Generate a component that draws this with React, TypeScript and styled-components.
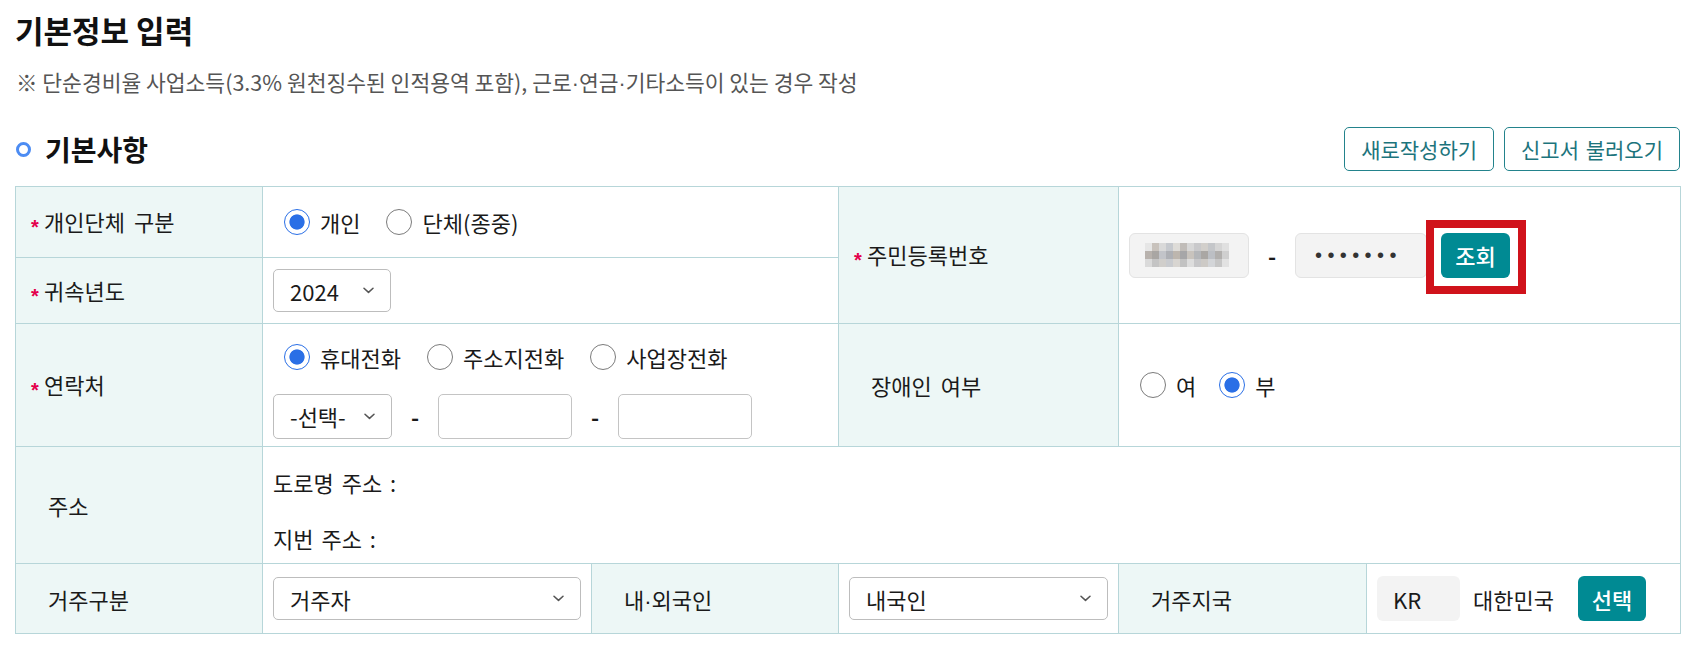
import React from 'react';
import styled, { createGlobalStyle } from 'styled-components';

const GlobalStyle = createGlobalStyle`
  * {
    box-sizing: border-box;
  }
  body {
    margin: 0;
    background: #fff;
    color: #111;
    font-family: 'Noto Sans CJK KR', 'Noto Sans', sans-serif;
  }
`;

const MOSAIC = [
  ['#e6e6e6', '#c8c2bc', '#d9d9d9', '#c6c9ce', '#dedcd8', '#c0bcb8', '#d7d7d7', '#c9c9cb', '#d2cfcb', '#c4c6c9', '#d5d5d5', '#e0e0e0'],
  ['#b8b2ad', '#a9a6a3', '#c2c4c9', '#aeb0b5', '#bdb6ae', '#a6a6a8', '#c8c3bd', '#b4b6b9', '#aaa7a4', '#bcbfc4', '#b1afad', '#cfcfcf'],
  ['#dadada', '#c4c4c4', '#d0cecb', '#c9cbcf', '#d8d5d1', '#c2c2c2', '#dddddd', '#c7c7c9', '#cdcac6', '#d3d5d8', '#c6c6c6', '#e2e2e2'],
];

const Chevron = () => (
  <svg width="11" height="7" viewBox="0 0 11 7" fill="none">
    <path d="M1 1.2 L5.5 5.4 L10 1.2" stroke="#555" strokeWidth="1.5" strokeLinecap="round" strokeLinejoin="round" />
  </svg>
);

const Mosaic = () => (
  <svg width="84" height="24" viewBox="0 0 84 24">
    {MOSAIC.map((row, r) =>
      row.map((c, i) => <rect key={`${r}-${i}`} x={i * 7} y={r * 8} width="7" height="8" fill={c} />)
    )}
  </svg>
);

interface RadioProps {
  label: string;
  checked?: boolean;
}

const Radio: React.FC<RadioProps> = ({ label, checked }) => (
  <RadioLabel>
    <RadioMark $checked={checked} />
    {label}
  </RadioLabel>
);

const Select: React.FC<{ value: string; width?: number; height?: number }> = ({ value, width, height }) => (
  <SelectBox $width={width} $height={height}>
    <span>{value}</span>
    <Chevron />
  </SelectBox>
);

const Required = () => <Star>*</Star>;

const App: React.FC = () => {
  return (
    <Page>
      <GlobalStyle />
      <Title>기본정보 입력</Title>
      <Notice>
        ※ 단순경비율 사업소득(3.3% 원천징수된 인적용역 포함), 근로<Mid>·</Mid>연금<Mid>·</Mid>기타소득이 있는 경우 작성
      </Notice>

      <SectionHead>
        <SectionTitle>
          <Dot />
          기본사항
        </SectionTitle>
        <Actions>
          <OutlineButton>새로작성하기</OutlineButton>
          <OutlineButton>신고서 불러오기</OutlineButton>
        </Actions>
      </SectionHead>

      <Table>
        <colgroup>
          <col style={{ width: 247 }} />
          <col style={{ width: 329 }} />
          <col style={{ width: 247 }} />
          <col style={{ width: 280 }} />
          <col style={{ width: 248 }} />
          <col style={{ width: 314 }} />
        </colgroup>
        <tbody>
          <Row $h={71}>
            <Label>
              <Required />
              개인단체 구분
            </Label>
            <Cell colSpan={2}>
              <RadioGroup>
                <Radio label="개인" checked />
                <Radio label="단체(종중)" />
              </RadioGroup>
            </Cell>
            <Label rowSpan={2}>
              <Required />
              주민등록번호
            </Label>
            <Cell rowSpan={2} colSpan={2}>
              <Inline>
                <GrayInput $width={120}>
                  <Mosaic />
                </GrayInput>
                <Dash>-</Dash>
                <GrayInput $width={132}>
                  <Dots>•••••••</Dots>
                </GrayInput>
                <Highlight>
                  <FillButton>조회</FillButton>
                </Highlight>
              </Inline>
            </Cell>
          </Row>
          <Row $h={66}>
            <Label>
              <Required />
              귀속년도
            </Label>
            <Cell colSpan={2}>
              <Select value="2024" width={118} />
            </Cell>
          </Row>
          <Row $h={123}>
            <Label>
              <Required />
              연락처
            </Label>
            <Cell colSpan={2}>
              <Stack>
                <RadioGroup>
                  <Radio label="휴대전화" checked />
                  <Radio label="주소지전화" />
                  <Radio label="사업장전화" />
                </RadioGroup>
                <Inline>
                  <Select value="-선택-" width={119} height={45} />
                  <Dash>-</Dash>
                  <TextInput />
                  <Dash>-</Dash>
                  <TextInput />
                </Inline>
              </Stack>
            </Cell>
            <Label $plain>장애인 여부</Label>
            <Cell colSpan={2}>
              <RadioGroup $gap={23}>
                <Radio label="여" />
                <Radio label="부" checked />
              </RadioGroup>
            </Cell>
          </Row>
          <Row $h={117}>
            <Label $plain>주소</Label>
            <Cell colSpan={5}>
              <AddressLines>
                <span>도로명 주소 :</span>
                <span>지번 주소 :</span>
              </AddressLines>
            </Cell>
          </Row>
          <Row $h={70}>
            <Label $plain>거주구분</Label>
            <Cell>
              <Select value="거주자" />
            </Cell>
            <Label $plain>
              내<Mid>·</Mid>외국인
            </Label>
            <Cell>
              <Select value="내국인" />
            </Cell>
            <Label $plain>거주지국</Label>
            <Cell>
              <Inline>
                <CodeBox>KR</CodeBox>
                <CountryName>대한민국</CountryName>
                <FillButton $small>선택</FillButton>
              </Inline>
            </Cell>
          </Row>
        </tbody>
      </Table>
    </Page>
  );
};

export default App;

const Page = styled.div`
  padding: 12px 19px 0 15px;
`;

const Title = styled.h1`
  margin: 0;
  height: 35px;
  font-size: 31px;
  line-height: 35px;
  font-weight: 700;
  color: #111;
`;

const Notice = styled.p`
  height: 28px;
  margin: 21px 0 0 1px;
  font-size: 21.5px;
  line-height: 28px;
  color: #555;
`;

const Mid = styled.span`
  font-family: 'Liberation Sans', sans-serif;
  line-height: 0;
`;

const SectionHead = styled.div`
  display: flex;
  align-items: center;
  justify-content: space-between;
  height: 44px;
  margin-top: 31px;
`;

const SectionTitle = styled.h2`
  display: flex;
  align-items: center;
  gap: 14px;
  margin: 0;
  font-size: 28px;
  font-weight: 700;
  line-height: 34px;
  color: #111;
`;

const Dot = styled.span`
  width: 15px;
  height: 15px;
  margin-left: 1px;
  border: 3.5px solid #4c8cf3;
  border-radius: 50%;
`;

const Actions = styled.div`
  display: flex;
  gap: 10px;
`;

const OutlineButton = styled.button`
  height: 44px;
  padding: 0 16px;
  background: #fff;
  border: 1px solid #23838c;
  border-radius: 5px;
  color: #1c747c;
  font-family: inherit;
  font-size: 21px;
  word-spacing: 2px;
  cursor: pointer;
`;

const Table = styled.table`
  width: 100%;
  margin-top: 15px;
  border-collapse: collapse;
  table-layout: fixed;
`;

const Row = styled.tr<{ $h: number }>`
  height: ${(p) => p.$h}px;
`;

const Label = styled.th<{ $plain?: boolean }>`
  padding: 0 0 0 ${(p) => (p.$plain ? 32 : 15)}px;
  background: #edf7f6;
  border: 1px solid #b7d6d9;
  text-align: left;
  font-size: 22px;
  font-weight: 400;
  word-spacing: 4px;
  color: #1a1a1a;
  white-space: nowrap;
`;

const Star = styled.span`
  display: inline-block;
  width: 13px;
  color: #e4004b;
  font-family: 'Liberation Sans', sans-serif;
  font-size: 20px;
  font-weight: 700;
  vertical-align: -3px;
`;

const Cell = styled.td`
  padding: 0 10px;
  border: 1px solid #b7d6d9;
  font-size: 22px;
  color: #1a1a1a;
`;

const RadioGroup = styled.div<{ $gap?: number }>`
  display: flex;
  align-items: center;
  gap: ${(p) => p.$gap ?? 26}px;
  padding-left: 11px;
`;

const RadioLabel = styled.label`
  display: inline-flex;
  align-items: center;
  gap: 10px;
  font-size: 22px;
  line-height: 28px;
`;

const RadioMark = styled.span<{ $checked?: boolean }>`
  width: 26px;
  height: 26px;
  border-radius: 50%;
  border: 1.5px solid ${(p) => (p.$checked ? '#2a6fe6' : '#7b7b7b')};
  background: ${(p) =>
    p.$checked ? 'radial-gradient(circle, #2a6fe6 0 7.2px, #fff 8px)' : '#fff'};
`;

const SelectBox = styled.div<{ $width?: number; $height?: number }>`
  display: flex;
  align-items: center;
  justify-content: space-between;
  width: ${(p) => (p.$width ? `${p.$width}px` : '100%')};
  height: ${(p) => p.$height ?? 43}px;
  padding: 0 16px;
  background: #fff;
  border: 1px solid #bdbdbd;
  border-radius: 5px;
  font-size: 22px;
`;

const Inline = styled.div`
  display: flex;
  align-items: center;
`;

const Stack = styled.div`
  display: flex;
  flex-direction: column;
  gap: 23px;
  padding-top: 11px;
`;

const Dash = styled.span`
  width: 10px;
  margin: 0 18px;
  text-align: center;
  font-weight: 700;
  font-size: 22px;
`;

const TextInput = styled.input`
  width: 134px;
  height: 45px;
  border: 1px solid #c4c4c4;
  border-radius: 5px;
  background: #fff;
`;

const GrayInput = styled.div<{ $width: number }>`
  display: flex;
  align-items: center;
  width: ${(p) => p.$width}px;
  height: 45px;
  padding-left: 15px;
  background: #f3f3f3;
  border: 1px solid #e3e3e3;
  border-radius: 6px;
`;

const Dots = styled.span`
  padding-left: 4px;
  font-family: 'Liberation Sans', sans-serif;
  font-size: 20px;
  letter-spacing: 5.4px;
  color: #333;
`;

const Highlight = styled.span`
  position: relative;
  display: inline-flex;
  margin-left: 14px;

  &::after {
    content: '';
    position: absolute;
    top: -13px;
    left: -15px;
    right: -16px;
    bottom: -16px;
    border: 8px solid #d0121b;
    pointer-events: none;
  }
`;

const FillButton = styled.button<{ $small?: boolean }>`
  width: ${(p) => (p.$small ? 68 : 69)}px;
  height: 45px;
  margin-left: ${(p) => (p.$small ? 24 : 0)}px;
  padding: 0;
  background: #008a93;
  border: none;
  border-radius: 6px;
  color: #fff;
  font-family: inherit;
  font-size: 22px;
  font-weight: 500;
  cursor: pointer;
`;

const AddressLines = styled.div`
  display: flex;
  flex-direction: column;
  gap: 28px;
  padding-top: 9px;
  line-height: 28px;
  word-spacing: 3px;
`;

const CodeBox = styled.span`
  display: flex;
  align-items: center;
  width: 83px;
  height: 45px;
  padding-left: 16px;
  background: #f3f3f3;
  border-radius: 6px;
`;

const CountryName = styled.span`
  margin-left: 13px;
`;
